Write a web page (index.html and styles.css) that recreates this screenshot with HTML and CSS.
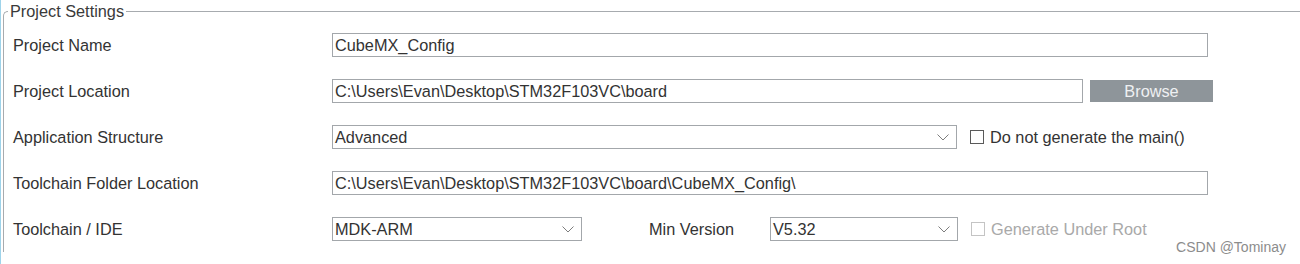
FILE: index.html
```html
<!DOCTYPE html>
<html lang="en">
<head>
<meta charset="utf-8">
<title>Project Settings</title>
<link rel="stylesheet" href="styles.css">
</head>
<body>
<div class="page">
  <fieldset class="group">
    <legend class="group-title">Project Settings</legend>
    <div class="rows">
      <div class="row">
        <span class="label">Project Name</span>
        <div class="field w-full">CubeMX_Config</div>
      </div>
      <div class="row">
        <span class="label">Project Location</span>
        <div class="field w-loc">C:\Users\Evan\Desktop\STM32F103VC\board</div>
        <div class="button">Browse</div>
      </div>
      <div class="row">
        <span class="label">Application Structure</span>
        <div class="field select w-app">
          <span>Advanced</span>
          <svg class="chev" width="12" height="7" viewBox="0 0 12 7"><polyline points="0.5,0.5 6,6 11.5,0.5" fill="none" stroke="#7d7d7d" stroke-width="1"/></svg>
        </div>
        <label class="check"><span class="box"></span><span>Do not generate the main()</span></label>
      </div>
      <div class="row">
        <span class="label">Toolchain Folder Location</span>
        <div class="field w-full">C:\Users\Evan\Desktop\STM32F103VC\board\CubeMX_Config\</div>
      </div>
      <div class="row">
        <span class="label">Toolchain / IDE</span>
        <div class="field select w-ide">
          <span>MDK-ARM</span>
          <svg class="chev" width="12" height="7" viewBox="0 0 12 7"><polyline points="0.5,0.5 6,6 11.5,0.5" fill="none" stroke="#7d7d7d" stroke-width="1"/></svg>
        </div>
        <span class="sublabel">Min Version</span>
        <div class="field select w-ver">
          <span>V5.32</span>
          <svg class="chev" width="12" height="7" viewBox="0 0 12 7"><polyline points="0.5,0.5 6,6 11.5,0.5" fill="none" stroke="#7d7d7d" stroke-width="1"/></svg>
        </div>
        <label class="check disabled"><span class="box"></span><span>Generate Under Root</span></label>
      </div>
    </div>
  </fieldset>
  <div class="watermark">CSDN @Tominay</div>
</div>
</body>
</html>
```

FILE: styles.css
```css
html, body {
  margin: 0;
  padding: 0;
  background: #ffffff;
}

body {
  font-family: "Liberation Sans", Arial, sans-serif;
  font-size: 16.3px;
  color: #333333;
  overflow: hidden;
}

.page {
  position: relative;
  height: 264px;
  border-left: 1px solid #9ed3ea;
  box-sizing: border-box;
  overflow: hidden;
}

.group {
  margin: 2px 0 0 2px;
  padding: 2px 0 0 4px;
  border: 1px solid #a7abaf;
  border-right: none;
  border-bottom: none;
  border-top-left-radius: 5px;
  min-width: 0;
}

.group-title {
  padding: 0 2px;
  line-height: 18px;
  font-size: 16.3px;
  color: #3a3a3a;
}

.rows {
  display: flex;
  flex-direction: column;
  padding-left: 5px;
}

.row {
  display: flex;
  align-items: center;
  height: 46px;
}

.label {
  width: 319px;
  flex: none;
}

.field {
  box-sizing: border-box;
  height: 24px;
  border: 1px solid #a3a7ab;
  padding: 0 2px;
  display: flex;
  align-items: center;
  white-space: nowrap;
  background: #ffffff;
  flex: none;
}

.select {
  justify-content: space-between;
  padding-right: 7px;
}

.chev {
  display: block;
  margin-top: 1px;
}

.w-full { width: 876px; }
.w-loc { width: 751px; }
.w-app { width: 625px; }
.w-ide { width: 250px; }
.w-ver { width: 188px; }

.button {
  box-sizing: border-box;
  width: 123px;
  height: 22px;
  margin-left: 7px;
  background: #8e959a;
  color: #eef0f2;
  display: flex;
  align-items: center;
  justify-content: center;
  flex: none;
}

.sublabel {
  width: 121px;
  margin-left: 67px;
  flex: none;
}

.check {
  display: flex;
  align-items: center;
  margin-left: 13px;
  gap: 6px;
}

.box {
  box-sizing: border-box;
  width: 14px;
  height: 14px;
  border: 1px solid #5a5a5a;
  background: #ffffff;
}

.check.disabled {
  color: #a9a9a9;
}

.check.disabled .box {
  border-color: #c4c4c4;
}

.watermark {
  position: absolute;
  right: 14px;
  top: 239px;
  font-size: 14px;
  color: #8c8c8c;
}
```
